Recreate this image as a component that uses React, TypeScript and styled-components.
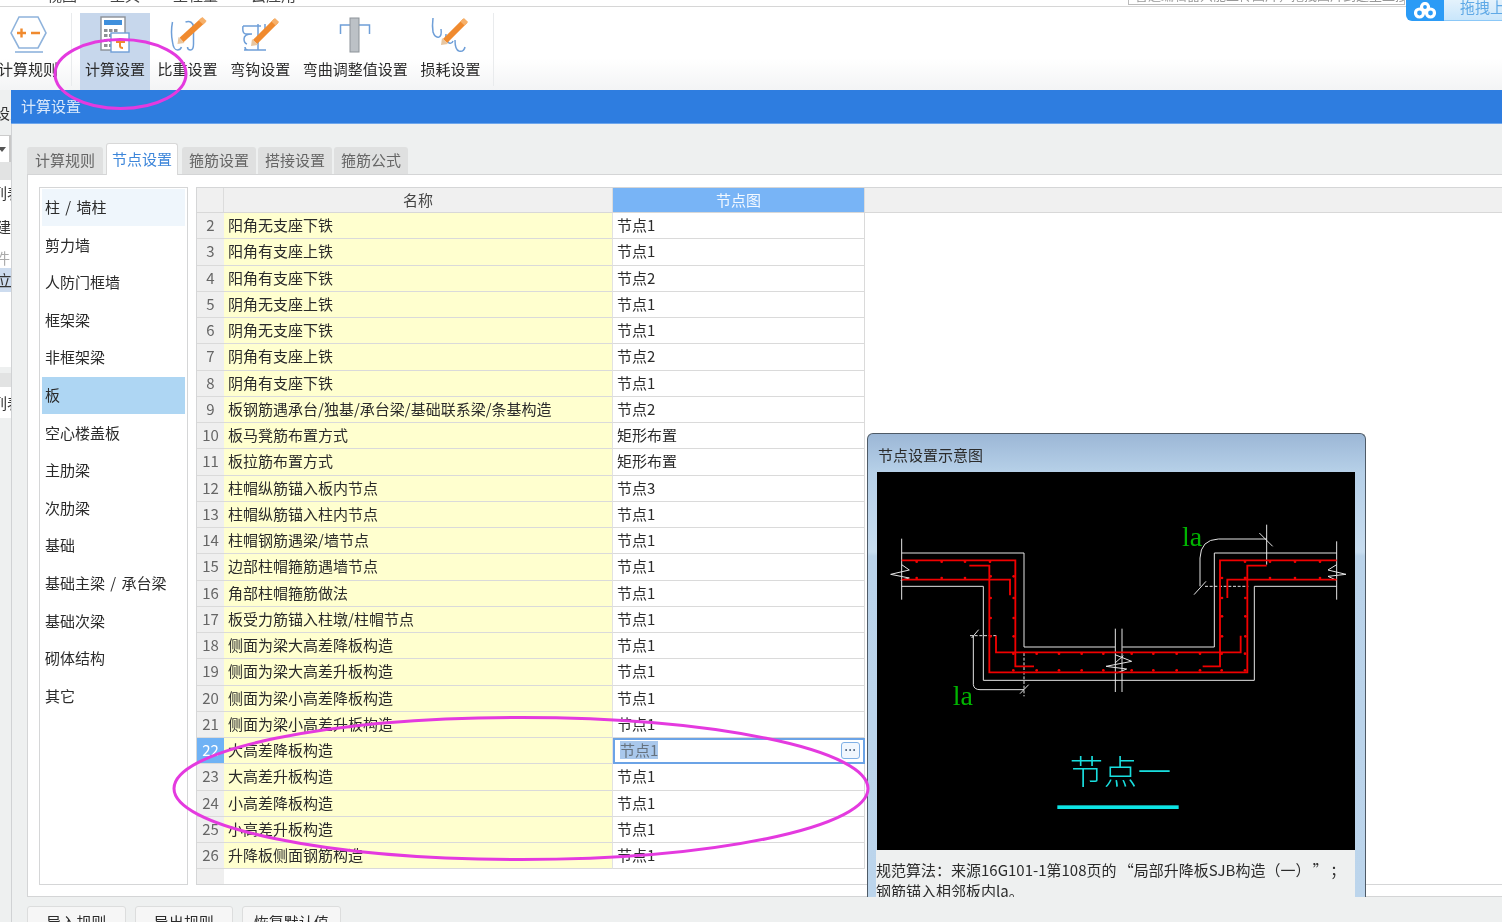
import React from "react";
import styled, { createGlobalStyle } from "styled-components";

const FONT = `"Noto Sans CJK SC", "Noto Sans", sans-serif`;

const Global = createGlobalStyle`
  html, body { margin: 0; padding: 0; background: #fff; }
  body { font-family: ${FONT}; }
  * { box-sizing: border-box; }
`;

const Page = styled.div`
  position: relative;
  width: 1502px;
  height: 922px;
  overflow: hidden;
  display: flex;
  flex-direction: column;
  background: #fff;
  color: #2b2b2b;
  font-size: 15px;
  font-family: ${FONT};
  filter: blur(0.35px);
`;

const MenuBar = styled.div`
  height: 7px;
  flex: none;
  display: flex;
  align-items: flex-end;
  overflow: hidden;
  border-bottom: 1px solid #d6d6d6;
  padding-left: 47px;
  gap: 33px;
  line-height: 20px;
  color: #444;
`;

const MenuItem = styled.span`
  flex: none;
  margin-bottom: 1px;
`;

const SearchHint = styled.div`
  margin-left: auto;
  margin-right: 97px;
  width: 277px;
  height: 20px;
  flex: none;
  border: 1px solid #bbb;
  margin-bottom: 1px;
  padding-left: 6px;
  font-size: 13px;
  line-height: 18px;
  color: #999;
  white-space: nowrap;
  overflow: hidden;
`;

const Toolbar = styled.div`
  height: 83px;
  flex: none;
  display: flex;
  padding-top: 6px;
  background: linear-gradient(180deg, #fff 0, #fff 62%, #f3f4f5 100%);
`;

const ToolGroup = styled.div<{ $w: number; $pl: number }>`
  width: ${(p) => p.$w}px;
  padding-left: ${(p) => p.$pl}px;
  display: flex;
  gap: 2.6px;
  flex: none;
  border-right: 1px solid #e9ebed;
  margin-bottom: 4px;
  height: 73px;
  overflow: visible;
`;

const ToolItem = styled.div<{ $active?: boolean; $shift?: number }>`
  display: flex;
  flex-direction: column;
  align-items: center;
  flex: none;
  padding: 3px 5px 0;
  height: 77px;
  margin-left: ${(p) => p.$shift ?? 0}px;
  background: ${(p) => (p.$active ? "#c7d7ec" : "transparent")};
`;

const ToolIcon = styled.svg`
  width: 48px;
  height: 42px;
  display: block;
  flex: none;
`;

const ToolLabel = styled.div`
  font-size: 15px;
  line-height: 20px;
  margin-top: 1px;
  white-space: nowrap;
  color: #2b2b2b;
`;

const Main = styled.div`
  flex: 1;
  min-height: 0;
  display: flex;
`;

const Strip = styled.div`
  width: 11px;
  flex: none;
  display: flex;
  flex-direction: column;
  background: #eef0f0;
  overflow: hidden;
`;

const StripText = styled.div<{ $h: number; $bg?: string; $c?: string; $in: number }>`
  height: ${(p) => p.$h}px;
  flex: none;
  background: ${(p) => p.$bg ?? "#fff"};
  color: ${(p) => p.$c ?? "#333"};
  line-height: ${(p) => p.$h}px;
  font-size: 15px;
  white-space: nowrap;
  text-indent: ${(p) => p.$in}px;
`;

const StripSpace = styled.div<{ $h: number; $bg: string }>`
  height: ${(p) => p.$h}px;
  flex: none;
  background: ${(p) => p.$bg};
`;

const StripCombo = styled.div`
  height: 27px;
  flex: none;
  background: #fff;
  border-right: 2px solid #c8c8c8;
  border-top: 1px solid #ccc;
  display: flex;
  align-items: center;
  &::before {
    content: "";
    border-left: 4px solid transparent;
    border-right: 4px solid transparent;
    border-top: 5px solid #555;
    margin-left: -2px;
  }
`;

const Dialog = styled.div`
  flex: 1;
  min-width: 0;
  display: flex;
  flex-direction: column;
  background: #eef0f0;
  border-left: 1px solid #d0d2d4;
`;

const TitleBar = styled.div`
  height: 34px;
  flex: none;
  margin-left: -1px;
  background: #2e7de0;
  border-bottom: 1px solid #6da6ec;
  color: #d9e8fa;
  font-size: 15px;
  line-height: 31px;
  padding-left: 10px;
`;

const Tabs = styled.div`
  margin: 19px 0 0 15px;
  height: 31px;
  display: flex;
  align-items: flex-end;
  gap: 2px;
  flex: none;
  position: relative;
`;

const Tab = styled.div<{ $active?: boolean; $first?: boolean }>`
  height: ${(p) => (p.$active ? 32 : 27)}px;
  margin: ${(p) => (p.$active ? "0 2px -1px 1px" : "0")};
  padding: ${(p) => (p.$active ? "0 5px" : p.$first ? "0 8px" : "0 7px")};
  line-height: ${(p) => (p.$active ? 29 : 26)}px;
  border-radius: 3px 3px 0 0;
  background: ${(p) => (p.$active ? "#fff" : "#dfe0e0")};
  color: ${(p) => (p.$active ? "#3d86da" : "#666")};
  border: ${(p) => (p.$active ? "1px solid #d8d8d8" : "0")};
  border-bottom: 0;
  position: relative;
  z-index: 1;
  flex: none;
  font-size: 15px;
`;

const Panel = styled.div`
  height: 723px;
  flex: none;
  margin-left: 15px;
  background: #fff;
  border: 1px solid #d4d5d6;
  border-right: 0;
  padding: 12px 0 11px 11px;
  display: flex;
  gap: 8px;
`;

const SideList = styled.div`
  width: 149px;
  flex: none;
  border: 1px solid #d5d6d7;
  padding: 1px;
  display: flex;
  flex-direction: column;
  gap: 1px;
`;

const SideItem = styled.div<{ $state?: "hover" | "on" }>`
  height: 36.6px;
  flex: none;
  line-height: 36px;
  padding-left: 3px;
  margin: 0 1px;
  font-size: 15px;
  word-spacing: 2px;
  color: #2b2b2b;
  background: ${(p) => (p.$state === "on" ? "#aed6f3" : p.$state === "hover" ? "#eff6fc" : "#fff")};
`;

const GridBox = styled.div`
  flex: 1;
  min-width: 0;
  border: 1px solid #d5d6d7;
  border-right: 0;
  display: flex;
  flex-direction: column;
`;

const HeadRow = styled.div`
  height: 25px;
  flex: none;
  display: grid;
  grid-template-columns: 27px 389px 252px 1fr;
  background: #f0f0f0;
  border-bottom: 1px solid #d8d8d8;
`;

const HeadCell = styled.div<{ $on?: boolean; $end?: boolean }>`
  text-align: center;
  line-height: 24px;
  font-size: 15px;
  color: ${(p) => (p.$on ? "#f4f9ff" : "#444")};
  background: ${(p) => (p.$on ? "#78b4f6" : "transparent")};
  border-right: ${(p) => (p.$end ? "0" : "1px solid #dcdcdc")};
`;

const Row = styled.div`
  height: 26.25px;
  flex: none;
  display: grid;
  grid-template-columns: 27px 389px 252px;
`;

const NumCell = styled.div<{ $on?: boolean }>`
  background: ${(p) => (p.$on ? "#6fb2f5" : "#efefef")};
  color: ${(p) => (p.$on ? "#fff" : "#666")};
  text-align: center;
  line-height: 24px;
  font-size: 15px;
  border-bottom: 1px solid #dadada;
`;

const NameCell = styled.div`
  background: #ffffcf;
  padding-left: 4px;
  line-height: 24px;
  font-size: 15px;
  white-space: nowrap;
  color: #2b2b2b;
  border-bottom: 1px solid #dadada;
  border-right: 1px solid #e2e2e2;
`;

const NodeCell = styled.div`
  padding-left: 4px;
  line-height: 24px;
  font-size: 15px;
  color: #2b2b2b;
  border-bottom: 1px solid #dadada;
  border-right: 1px solid #dadada;
`;

const EditCell = styled.div`
  border: 2px solid #6ba3e6;
  display: flex;
  align-items: center;
  padding: 0 3px 2px 5px;
  justify-content: space-between;
  background: #fff;
`;

const Selected = styled.span`
  background: #a9c8ec;
  color: #66727e;
  line-height: 18px;
  font-size: 15px;
`;

const MoreButton = styled.div`
  width: 19px;
  height: 17px;
  border: 1px solid #7fb0e6;
  border-radius: 3px;
  background: #f1f7fe;
  color: #5b6f88;
  font-family: "Liberation Sans", sans-serif;
  font-size: 12px;
  line-height: 14px;
  text-align: center;
  font-weight: 700;
  overflow: hidden;
`;

const Filler = styled.div`
  flex: 1;
  &::before {
    content: "";
    display: block;
    width: 27px;
    height: 100%;
    background: #efefef;
  }
`;

const Footer = styled.div`
  flex: none;
  display: flex;
  gap: 9px;
  margin: 9px 0 0 15px;
`;

const FootButton = styled.div`
  width: 98.5px;
  height: 30px;
  flex: none;
  background: #f6f6f6;
  border: 1px solid #dcdddd;
  border-radius: 3px;
  text-align: center;
  line-height: 29px;
  font-size: 15px;
  color: #2b2b2b;
`;

const Popup = styled.div`
  position: absolute;
  left: 867px;
  top: 433px;
  width: 499px;
  height: 464px;
  padding: 0 10px 0 9px;
  display: flex;
  flex-direction: column;
  border: 1px solid #4e5a66;
  border-bottom: 0;
  border-radius: 6px 6px 0 0;
  background: linear-gradient(180deg, #9cb7d6 0, #b6d0e8 38px, #c8ddf0 118px, #bad3ea 122px, #bcd5ec 100%);
`;

const PopupCaption = styled.div`
  height: 38px;
  flex: none;
  line-height: 42px;
  font-size: 15px;
  color: #2b2b2b;
  margin-left: 1px;
`;

const Diagram = styled.svg`
  width: 478px;
  height: 378px;
  flex: none;
  display: block;
  background: #000;
`;

const Note = styled.div`
  flex: 1;
  min-height: 0;
  overflow: hidden;
  margin-left: -1px;
  width: 479px;
  background: #eef0f0;
  font-size: 15px;
  line-height: 21px;
  padding-top: 9px;
  white-space: pre;
  word-spacing: -1px;
  color: #2b2b2b;
`;

const CloudBadge = styled.div`
  position: absolute;
  left: 1406px;
  top: 0;
  width: 96px;
  height: 21px;
  display: flex;
  border-radius: 0 0 0 6px;
  overflow: hidden;
`;

const CloudIcon = styled.div`
  width: 38px;
  background: #2b9bf6;
  display: flex;
  align-items: center;
  justify-content: center;
  flex: none;
`;

const CloudText = styled.div`
  flex: 1;
  background: linear-gradient(180deg, #e4f2fc, #c9e6fb);
  border-bottom: 1px solid #8cc8f7;
  color: #5fa9e6;
  font-size: 15px;
  line-height: 14px;
  padding-left: 16px;
  white-space: nowrap;
`;

const Marks = styled.svg`
  position: absolute;
  left: 0;
  top: 0;
  width: 1502px;
  height: 922px;
  pointer-events: none;
`;

const BLUE = "#6f9fd8";
const ORANGE = "#f08a2e";

const Pencil = ({ x1, y1, x2, y2 }: { x1: number; y1: number; x2: number; y2: number }) => (
  <g>
    <line x1={x1} y1={y1} x2={x2} y2={y2} stroke={ORANGE} strokeWidth={6} />
    <polygon points={`${x1 - 3},${y1 - 3} ${x1 + 3},${y1 + 3} ${x1 - 4},${y1 + 4}`} fill="#e8c6a0" />
    <line x1={x2 - 2.5} y1={y2 + 2.5} x2={x2 + 1} y2={y2 - 1} stroke="#f6b06a" strokeWidth={6} />
  </g>
);

const tools = [
  {
    label: "计算设置",
    active: true,
    view: "91 16 48 42",
    art: (
      <g>
        <rect x="101" y="17" width="24" height="33" fill="#fff" stroke="#8a8f96" strokeWidth="1.4" />
        <rect x="104" y="20" width="18" height="5" fill="#3f8fdc" />
        {[104, 109, 114].map((x) =>
          [29, 34, 39, 44].map((y) => <rect key={`${x}-${y}`} x={x} y={y} width="3.5" height="3" fill="#8d9094" />)
        )}
        <rect x="111" y="33" width="18" height="19" fill="#fff" stroke="#6f9fd8" strokeWidth="1.4" />
        <path d="M116 42h9M120 38v8q0 2 3 2" fill="none" stroke={ORANGE} strokeWidth="2" />
      </g>
    ),
  },
  {
    label: "比重设置",
    view: "163.5 16 48 42",
    art: (
      <g>
        <path d="M172 22q-2 10 0 20q1 8 5 8q3 0 4 -3M185 22q7 -2 8 5v17q0 6 -3 6q-3 0 -3 -3" fill="none" stroke={BLUE} strokeWidth="1.5" />
        <Pencil x1={181} y1={40} x2={203} y2={20} />
      </g>
    ),
  },
  {
    label: "弯钩设置",
    view: "236 16 48 42",
    art: (
      <g>
        <path d="M243 26h18M243 26q-1 8 3 8h6q-8 0 -8 5q0 4 3 5M244 50h22M258 24v26M265 24v6M248 50q-3 0 -3 -3" fill="none" stroke={BLUE} strokeWidth="1.5" />
        <Pencil x1={255} y1={42} x2={276} y2={21} />
      </g>
    ),
  },
  {
    label: "弯曲调整值设置",
    view: "331.5 16 48 42",
    art: (
      <g>
        <path d="M341 34v-9h29v9" fill="none" stroke={BLUE} strokeWidth="1.5" />
        <rect x="350.5" y="18" width="9" height="34" fill="#bcc1c6" stroke="#8d9399" strokeWidth="1" />
      </g>
    ),
  },
  {
    label: "损耗设置",
    view: "426 16 48 42",
    art: (
      <g>
        <path d="M433 18q-1 8 0 14q2 6 6 5q3 -1 2 -8M446 34q-1 6 3 9q3 1 4 -2M455 40q0 10 4 11q5 1 6 -4" fill="none" stroke={BLUE} strokeWidth="1.5" />
        <Pencil x1={445} y1={41} x2={465} y2={21} />
      </g>
    ),
  },
];

const sideItems = ["柱 / 墙柱", "剪力墙", "人防门框墙", "框架梁", "非框架梁", "板", "空心楼盖板", "主肋梁", "次肋梁", "基础", "基础主梁 / 承台梁", "基础次梁", "砌体结构", "其它"];

const rows: [number, string, string][] = [
  [2, "阳角无支座下铁", "节点1"],
  [3, "阳角有支座上铁", "节点1"],
  [4, "阳角有支座下铁", "节点2"],
  [5, "阴角无支座上铁", "节点1"],
  [6, "阴角无支座下铁", "节点1"],
  [7, "阴角有支座上铁", "节点2"],
  [8, "阴角有支座下铁", "节点1"],
  [9, "板钢筋遇承台/独基/承台梁/基础联系梁/条基构造", "节点2"],
  [10, "板马凳筋布置方式", "矩形布置"],
  [11, "板拉筋布置方式", "矩形布置"],
  [12, "柱帽纵筋锚入板内节点", "节点3"],
  [13, "柱帽纵筋锚入柱内节点", "节点1"],
  [14, "柱帽钢筋遇梁/墙节点", "节点1"],
  [15, "边部柱帽箍筋遇墙节点", "节点1"],
  [16, "角部柱帽箍筋做法", "节点1"],
  [17, "板受力筋锚入柱墩/柱帽节点", "节点1"],
  [18, "侧面为梁大高差降板构造", "节点1"],
  [19, "侧面为梁大高差升板构造", "节点1"],
  [20, "侧面为梁小高差降板构造", "节点1"],
  [21, "侧面为梁小高差升板构造", "节点1"],
  [22, "大高差降板构造", "节点1"],
  [23, "大高差升板构造", "节点1"],
  [24, "小高差降板构造", "节点1"],
  [25, "小高差升板构造", "节点1"],
  [26, "升降板侧面钢筋构造", "节点1"],
];

const pts = (xs: number[], y: number) => xs.map((x) => [x, y] as [number, number]);
const bottomXs = [430, 500, 567, 635, 700, 785, 850, 920, 990, 1055, 1125];
const redDots: [number, number][] = [
  ...pts([140, 215, 285, 360, 1125, 1200, 1275, 1350], 396),
  ...pts([140, 215, 285, 1125, 1200, 1275, 1350], 445),
  ...pts(bottomXs, 672),
  ...pts(bottomXs, 722),
  ...[440, 505, 565, 620].flatMap((y) => [[362, y], [431, y]] as [number, number][]),
  ...[445, 505, 560, 620].flatMap((y) => [[1056, y], [1126, y]] as [number, number][]),
];

export default function App() {
  return (
    <Page>
      <Global />
      <MenuBar>
        <MenuItem>视图</MenuItem>
        <MenuItem>工具</MenuItem>
        <MenuItem>工程量</MenuItem>
        <MenuItem>云应用</MenuItem>
        <SearchHint>普通编辑器只能上传图片，拖拽图片到这里直接上传</SearchHint>
      </MenuBar>
      <Toolbar>
        <ToolGroup $w={72} $pl={0}>
          <ToolItem $shift={-7}>
            <ToolIcon viewBox="4 16 48 42">
              <path d="M11 33L19 17H38L46 33L38 48H19Z" fill="#fff" stroke="#8fb3dc" strokeWidth="1.6" />
              <path d="M15 52H43" stroke="#8fb3dc" strokeWidth="1.6" />
              <path d="M17 33h9M21.5 28.500v9M31 33h9" stroke={ORANGE} strokeWidth="2.4" />
            </ToolIcon>
            <ToolLabel>计算规则</ToolLabel>
          </ToolItem>
        </ToolGroup>
        <ToolGroup $w={422} $pl={8}>
          {tools.map((t) => (
            <ToolItem key={t.label} $active={t.active}>
              <ToolIcon viewBox={t.view}>{t.art}</ToolIcon>
              <ToolLabel>{t.label}</ToolLabel>
            </ToolItem>
          ))}
        </ToolGroup>
      </Toolbar>
      <Main>
        <Strip>
          <StripText $h={45} $bg="#eef0f0" $in={-5}>设置</StripText>
          <StripCombo />
          <StripSpace $h={18} $bg="#e2e3e3" />
          <StripText $h={26} $in={-8}>列表</StripText>
          <StripText $h={42} $in={-4}>建</StripText>
          <StripText $h={20} $c="#aaa" $in={-5}>件</StripText>
          <StripText $h={24} $bg="#cddcef" $in={-3}>立</StripText>
          <StripSpace $h={75} $bg="#fff" />
          <StripSpace $h={6} $bg="#eef0f0" />
          <StripSpace $h={14} $bg="#e2e3e3" />
          <StripText $h={31} $in={-8}>列表</StripText>
        </Strip>
        <Dialog>
          <TitleBar>计算设置</TitleBar>
          <Tabs>
            <Tab $first>计算规则</Tab>
            <Tab $active>节点设置</Tab>
            <Tab>箍筋设置</Tab>
            <Tab>搭接设置</Tab>
            <Tab>箍筋公式</Tab>
          </Tabs>
          <Panel>
            <SideList>
              {sideItems.map((s, i) => (
                <SideItem key={s} $state={i === 0 ? "hover" : i === 5 ? "on" : undefined}>
                  {s}
                </SideItem>
              ))}
            </SideList>
            <GridBox>
              <HeadRow>
                <HeadCell />
                <HeadCell>名称</HeadCell>
                <HeadCell $on>节点图</HeadCell>
                <HeadCell $end />
              </HeadRow>
              {rows.map(([n, name, node]) => (
                <Row key={n}>
                  <NumCell $on={n === 22}>{n}</NumCell>
                  <NameCell>{name}</NameCell>
                  {n === 22 ? (
                    <EditCell>
                      <Selected>{node}</Selected>
                      <MoreButton>···</MoreButton>
                    </EditCell>
                  ) : (
                    <NodeCell>{node}</NodeCell>
                  )}
                </Row>
              ))}
              <Filler />
            </GridBox>
          </Panel>
          <Footer>
            <FootButton>导入规则</FootButton>
            <FootButton>导出规则</FootButton>
            <FootButton>恢复默认值</FootButton>
          </Footer>
        </Dialog>
      </Main>

      <Popup>
        <PopupCaption>节点设置示意图</PopupCaption>
        <Diagram viewBox="21 127 1434 1134">
          <g fill="none" stroke="#e4e4e4" strokeWidth="3">
            <path d="M95 327V510M95 370H462V652H735M95 470H340V752H1153V470H1400M1400 370H1033V652H757M1400 335V510M736 597V787M756 597V787" />
            <path d="M95 405L118 421L62 434L118 445L92 452" />
            <path d="M1400 405L1374 421L1428 434L1374 440L1400 452" />
            <path d="M735 675L785 695L708 710L770 718L740 730M760 678L735 700" />
            <path d="M1190 285V405M1208 350L1168 310M1190 328H1045Q992 330 990 385V470M972 495L1008 455" />
            <path d="M310 618V765Q312 780 330 780H462M450 792L476 765M305 625L326 600" />
            <path d="M1005 470H1135M300 618H380M462 670V800" strokeDasharray="9 5" />
          </g>
          <g fill="none" stroke="#f00000" strokeWidth="5.500">
            <path d="M95 392H436V710H492" />
            <path d="M95 450H420V497" />
            <path d="M298 408H358V728H1132V408H1190" />
            <path d="M1400 392H1050V710H998" />
            <path d="M1400 450H1072V505" />
            <path d="M378 618V668H1112V618" />
          </g>
          {redDots.map(([x, y], i) => (
            <circle key={i} cx={x} cy={y} r="4" fill="#f00000" />
          ))}
          <g fill="#00b400" fontFamily='"Liberation Serif", serif' fontSize="84">
            <text x="936" y="348">la</text>
            <text x="248" y="827">la</text>
          </g>
          <text x="752" y="1062" fill="#19dede" fontFamily={FONT} fontWeight="300" fontSize="100" letterSpacing="2" textAnchor="middle">节点一</text>
          <rect x="562" y="1127" width="364" height="11" fill="#0de4e4" />
        </Diagram>
        <Note>{"规范算法：来源16G101-1第108页的 “局部升降板SJB构造（一） ” ；\n钢筋锚入相邻板内la。"}</Note>
      </Popup>

      <CloudBadge>
        <CloudIcon>
          <svg width="24" height="18" viewBox="0 0 24 18">
            <g fill="none" stroke="#fff" strokeWidth="3.200">
              <circle cx="12" cy="5" r="3.500" />
              <circle cx="6.500" cy="11" r="4" />
              <circle cx="17.500" cy="11" r="4" />
            </g>
          </svg>
        </CloudIcon>
        <CloudText>拖拽上传</CloudText>
      </CloudBadge>

      <Marks viewBox="0 0 1502 922">
        <g fill="none" stroke="#e43adf" strokeWidth="3">
          <ellipse cx="120.500" cy="74" rx="65.500" ry="34.500" />
          <ellipse cx="521" cy="788.500" rx="347" ry="71" />
        </g>
      </Marks>
    </Page>
  );
}
